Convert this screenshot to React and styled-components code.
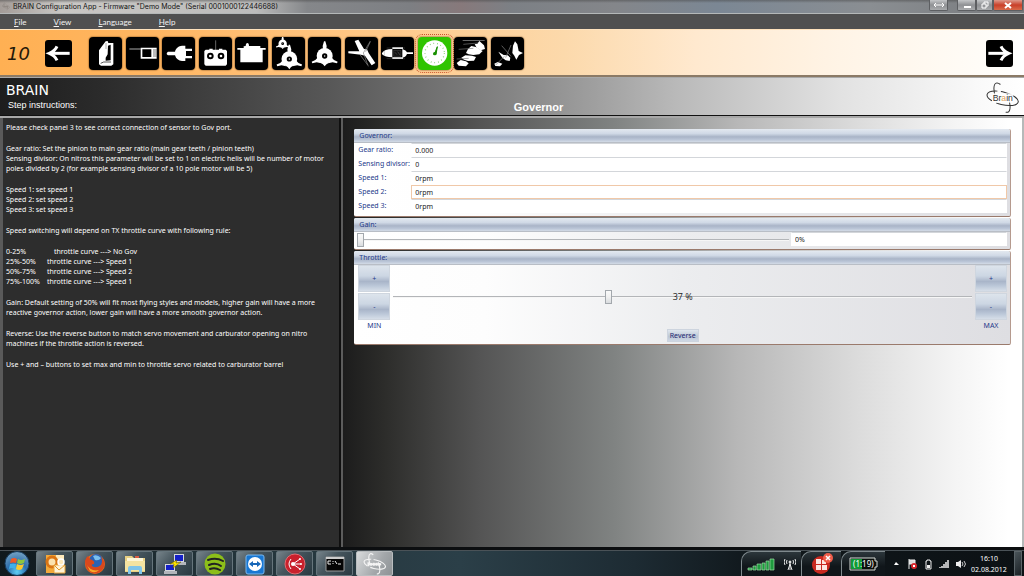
import React, { useState } from 'react';
import styled, { createGlobalStyle, css } from 'styled-components';

const GlobalStyle = createGlobalStyle`
  *, *::before, *::after { box-sizing: border-box; }
  html, body { margin: 0; padding: 0; }
  body { font-family: Lato, "Open Sans", "Noto Sans", sans-serif; font-size: 8px; }
  button, input { font: inherit; margin: 0; padding: 0; border: 0; }
  button { cursor: pointer; }
`;

const Screen = styled.div`
  min-height: 100vh;
  display: flex;
  flex-direction: column;
  background: #1c1f22;
`;

/* ---------- window frame ---------- */

const TitleBar = styled.header`
  display: flex;
  align-items: center;
  height: 14px;
  padding: 0 1px 0 2px;
  gap: 3px;
  border-bottom: 1px solid #b4b8b8;
  background:
    linear-gradient(180deg, rgba(70, 70, 70, 0.5) 0, transparent 3px),
    linear-gradient(90deg, #a39c98 0, #c9c7c4 6%, #bcbcbb 25%, #85878a 30%, #7d7f83 40%,
      #87797b 45%, #7c8085 50%, #84868a 60%, #7b8794 70%, #8a8e92 85%, #77797c 100%);
  svg { width: 8px; height: 9px; }
`;

const Title = styled.h1`
  flex: 1;
  margin: 0;
  font: 400 7px/14px Inter, sans-serif;
  color: #111;
  white-space: nowrap;
`;

const WindowButtons = styled.div`
  display: flex;
  align-self: flex-start;
  height: 11px;
`;

const WindowButton = styled.button`
  display: grid;
  place-items: center;
  width: ${p => p.$w}px;
  height: 11px;
  margin-right: ${p => (p.$apart ? 9 : 0)}px;
  border: 1px solid #5d5f62;
  border-top: 0;
  border-radius: 0 0 2px 2px;
  background: ${p => (p.$close
    ? 'linear-gradient(180deg, #dd9a8c 0, #c9402a 50%, #d96a4a 100%)'
    : 'linear-gradient(180deg, #c4c6c8 0, #8f9194 50%, #a9abad 100%)')};
  svg { width: 12px; height: 8px; }
`;

const MenuBar = styled.nav`
  display: flex;
  height: 15px;
  padding: 1px 0 0 14px;
  gap: 27px;
  background: #505050;
  button {
    background: none;
    color: #f2f2f2;
    font-size: 8px;
    line-height: 14px;
  }
  button::first-letter { text-decoration: underline; }
`;

const ToolBar = styled.nav`
  display: flex;
  align-items: center;
  height: 48px;
  padding: 2px 11px 0 7px;
  border-top: 1px solid #ffe3bd;
  border-bottom: 2px solid #8b7a66;
  background: linear-gradient(90deg, #ffb053 0, #ffb662 15%, #ffc887 36%, #fcd9ab 55%, #ffe9cf 68%, #fff4e6 82%, #fffdf9 97%, #fff 100%);
`;

const StepNumber = styled.output`
  width: 38px;
  font: italic 400 18px/24px "DejaVu Sans", sans-serif;
  color: #241808;
`;

const ArrowButton = styled.button`
  width: 27px;
  height: 27px;
  border-radius: 3px;
  background: #000;
  svg { display: block; width: 27px; height: 27px; }
`;

const StepList = styled.div`
  display: flex;
  justify-content: space-between;
  width: 435px;
  margin: 0 auto 0 17px;
`;

const StepButton = styled.button`
  width: 33px;
  height: 33px;
  border-radius: 4px;
  background: ${p => (p.$active ? '#2fc400' : '#000')};
  box-shadow: 0 0 1px 1px rgba(90, 50, 10, 0.3);
  ${p => p.$active && css`
    outline: 1px dotted #c8542c;
    outline-offset: 2px;
  `}
  svg { display: block; width: 33px; height: 33px; }
`;

const StepHeader = styled.section`
  display: grid;
  grid-template-columns: auto 1fr auto;
  height: 39px;
  padding: 4px 4px 0 6px;
  border-top: 1px solid #a9a9a9;
  border-bottom: 1px solid #111;
  color: #fff;
  background: linear-gradient(90deg, #1d1d1d 0, #2b2b2b 10%, #575757 32%, #858585 50%, #b9b9b9 66%, #e2e2e2 82%, #fafafa 96%, #fff 100%);
`;

const Product = styled.div`
  padding-right: 14px;
  font: 400 14px/16px "DejaVu Sans", sans-serif;
  small {
    display: block;
    padding-left: 2px;
    font: 400 9px/14px "Liberation Sans", sans-serif;
  }
`;

const StepTitle = styled.h2`
  align-self: end;
  margin: 0 0 1px;
  text-align: center;
  font: 700 11px/14px "Liberation Sans", sans-serif;
`;

const Brand = styled.div`
  svg { display: block; width: 34px; height: 32px; }
`;

/* ---------- main panels ---------- */

const Panels = styled.main`
  flex: 1;
  display: grid;
  grid-template-columns: 1fr 2fr;
  border-top: 2px solid #a8a8a8;
  border-bottom: 3px solid #0c0e10;
`;

const Instructions = styled.section`
  padding: 5px 2px 8px 3px;
  border-left: 3px solid #5a5a5a;
  border-right: 2px solid #0f0f0f;
  background: #2d2d2d;
  color: #fff;
  font: 400 7px/10px "Noto Sans", sans-serif;
  p { margin: 0 0 11px; }
  table { border-collapse: collapse; margin: 0 0 11px; }
  td { padding: 0; height: 10px; }
  td:first-child { width: 41px; }
  tr:first-child td:last-child { padding-left: 7px; }
`;

const Settings = styled.section`
  display: flex;
  flex-direction: column;
  gap: 1px;
  padding: 11px 11px 12px 11px;
  border-left: 2px solid #5c5c5c;
  border-right: 2px solid #b5b9b9;
  background: linear-gradient(90deg, #1c1c1c 0, #2c2c2a 6%, #545454 20%, #808382 40%, #b7b7b7 58%, #dcdcdc 76%, #f4f4f4 90%, #fff 98%);
`;

const Group = styled.fieldset`
  min-width: 0;
  margin: 0;
  padding: 0 0 ${p => p.$foot}px;
  border: 0;
  border-right: 1px solid #b59a8e;
  border-bottom: 1px solid #9a7a6c;
  border-radius: 2px;
  background: linear-gradient(90deg, #fff 0, #fdfdfd 20%, #ecedef 50%, #dedee2 100%);
  color: #24398a;
`;

const GroupTitle = styled.legend`
  float: left;
  width: 100%;
  height: 14px;
  padding: 0 5px;
  border-bottom: 1px solid #b9bec6;
  border-radius: 2px 2px 0 0;
  background: linear-gradient(180deg, #e3e9f0 0, #d0d9e6 35%, #a9b4c7 60%, #b9c4d6 80%, #d3dbe6 100%);
  font: 400 7px/14px "Noto Sans", sans-serif;
  color: #24398a;
`;

const Field = styled.div`
  clear: both;
  display: grid;
  grid-template-columns: 53px 1fr;
  height: 14px;
  padding: 0 3px 0 4px;
  label { font: 400 7px/14px "Noto Sans", sans-serif; white-space: nowrap; }
`;

const TextBox = styled.input`
  width: 100%;
  height: 14px;
  padding: 0 3px;
  border: 1px solid ${p => (p.$hot ? '#f0c8a8' : 'transparent')};
  border-top-color: ${p => (p.$hot ? '#f0c8a8' : '#d3d6da')};
  background: #fff;
  color: #222;
  font: 400 7px/12px "Noto Sans", sans-serif;
  outline: none;
`;

const GainRow = styled.div`
  clear: both;
  display: grid;
  grid-template-columns: 2fr 1fr;
  gap: 2px;
  height: 15px;
  padding: 0 3px 0 3px;
`;

const Slider = styled.input`
  appearance: none;
  width: 100%;
  height: 15px;
  background: transparent;
  &::-webkit-slider-runnable-track {
    height: 2px;
    border-top: 1px solid #b3b5b8;
    background: #f6f6f6;
  }
  &::-webkit-slider-thumb {
    appearance: none;
    width: 7px;
    height: 14px;
    margin-top: -7px;
    border: 1px solid #a3a8ad;
    background: linear-gradient(180deg, #fafafa 0, #f0f0f0 50%, #d9dcdf 100%);
  }
`;

const ThrottleRow = styled.div`
  clear: both;
  display: grid;
  grid-template-columns: 32px 1fr 32px;
  column-gap: 3px;
  padding: 0 3px 0 4px;
`;

const TrimStack = styled.div`
  display: flex;
  flex-direction: column;
  gap: 1px;
  text-align: center;
  font: 400 7px/10px "Noto Sans", sans-serif;
`;

const TrimButton = styled.button`
  height: 27px;
  border: 1px solid #cfd6df;
  background: linear-gradient(180deg, #dde4ec 0, #ccd6e3 40%, #a9b5c9 62%, #bcc8d9 80%, #d6dee8 100%);
  color: #24398a;
  line-height: 24px;
`;

const Travel = styled.div`
  display: grid;
  grid-template-rows: 64px 14px;
  justify-items: center;
  > * { grid-column: 1; }
  ${Slider} { grid-row: 1; align-self: center; }
`;

const Percent = styled.output`
  grid-row: 1;
  align-self: center;
  font: 400 9px/12px "Open Sans", sans-serif;
  color: #222;
  pointer-events: none;
`;

const ReverseButton = styled.button`
  grid-row: 2;
  width: 32px;
  height: 13px;
  border: 1px solid #cdd4de;
  background: linear-gradient(180deg, #dfe6ee 0, #bcc6d6 60%, #cfd8e4 100%);
  color: #1d2770;
  font: 400 7px/11px "Noto Sans", sans-serif;
`;

/* ---------- taskbar ---------- */

const TaskBar = styled.footer`
  display: flex;
  height: 26px;
  padding-right: 2px;
  border-top: 1px solid #4a5257;
  background: linear-gradient(90deg, #10191d 0, #223238 20%, #2b3f48 45%, #1d2b33 62%, #10171b 74%, #0c1114 100%);
`;

const StartButton = styled.button`
  width: 34px;
  background: none;
  svg { display: block; width: 26px; height: 25px; margin-left: 4px; }
`;

const TaskButtons = styled.div`
  display: flex;
  flex: 1;
  gap: 3px;
  padding-left: 2px;
`;

const TaskButton = styled.button`
  display: grid;
  place-items: center;
  width: 37px;
  height: 25px;
  border: 1px solid ${p => (p.$active ? '#b9bdbf' : '#66757c')};
  border-radius: 2px;
  background: ${p => (p.$active
    ? 'linear-gradient(120deg, #d9dbdc 0, #a3a7aa 60%, #8d9295 100%)'
    : 'linear-gradient(130deg, #76838a 0, #47565e 40%, #2a3941 100%)')};
  svg { width: 24px; height: 22px; }
`;

const TrayTab = styled.div`
  display: flex;
  align-items: center;
  justify-content: center;
  gap: 9px;
  width: ${p => p.$w}px;
  border-left: 1px solid #7f898d;
  border-top: 1px solid #7f898d;
  border-top-left-radius: 10px;
  background: linear-gradient(180deg, #2c363b 0, #10161a 60%);
  svg { height: 22px; width: ${p => p.$icon}px; }
  svg + svg { width: 12px; }
`;

const TrayIcons = styled.div`
  display: flex;
  align-items: center;
  gap: 5px;
  padding-left: 6px;
  svg { width: 11px; height: 12px; }
`;

const Clock = styled.time`
  width: 46px;
  margin: 0 2px 0 0;
  padding-top: 2px;
  text-align: center;
  font: 400 7px/11px "Noto Sans", sans-serif;
  color: #fff;
  span { display: block; }
`;

const ShowDesktop = styled.button`
  width: 8px;
  border: 1px solid #5b6468;
  background: linear-gradient(135deg, #4a5459, #1a2024);
`;

/* ---------- drawings ---------- */

const W = '#fff';

const Book = () => (
  <svg viewBox="0 0 99 99" fill={W}>
    <path d="M50 13 L56 12 L58 18 H73 V82 L67 86 H36 L30 82 V40 Z" />
    <path d="M57 26 L65 23 V70 L50 71 V62 L56 52 Z" fill="#000" />
    <path d="M35 79 L44 75 H66" stroke="#000" strokeWidth="2" fill="none" />
    <path d="M51 18 V36" stroke="#888" strokeWidth="2" />
  </svg>
);

const Receiver = () => (
  <svg viewBox="0 0 99 99" fill={W}>
    <path d="M10 36 H44" stroke="#aaa" strokeWidth="3" fill="none" />
    <path d="M44 32 H92 V65 H44 Z M49 37 V60 H76 V37 Z" fillRule="evenodd" />
    <path d="M81 39 H92 M81 45 H92 M81 51 H92 M81 57 H92" stroke="#333" strokeWidth="2" />
  </svg>
);

const Plug = () => (
  <svg viewBox="0 0 99 99" fill={W}>
    <path d="M18 44 H39 C42 32 50 27 60 26 H70 V35 H90 V42 H72 V57 H90 V64 H70 V72 H60 C50 71 42 66 39 55 H18 Q10 50 18 44 Z" />
  </svg>
);

const Radio = () => (
  <svg viewBox="0 0 99 99" fill={W}>
    <path d="M50 10 V40" stroke="#999" strokeWidth="2" />
    <path d="M31 35 H41 V38 H60 V35 H70 V38 H80 L84 42 V82 L80 86 H20 L16 82 V42 L20 38 H31 Z" />
    <circle cx="34" cy="57" r="10" fill="#000" /><circle cx="66" cy="57" r="10" fill="#000" />
    <circle cx="34" cy="57" r="4" /><circle cx="66" cy="57" r="4" />
  </svg>
);

const Servo = () => (
  <svg viewBox="0 0 99 99" fill={W}>
    <path d="M32 26 Q32 18 37 18 Q42 18 42 27 H76 V33 H92 V38 H83 V76 H16 V38 H7 V33 H26 V28 L32 27 Z" />
  </svg>
);

const Swash = ({ x = 50, y = 57, s = 1 }) => (
  <g transform={`translate(${x} ${y}) scale(${s})`}>
    <path d="M-2 -44 H2 L6 -30 L5 -20 H-5 L-6 -30 Z M-20 4 L-28 12 L-39 17 L-37 22 L-24 19 L-10 22 Z M20 4 L28 12 L39 17 L37 22 L24 19 L10 22 Z M-10 20 L-4 26 L0 31 L4 26 L10 20 Z" />
    <circle r="24" />
    <circle r="8" fill="#000" />
    <circle r="2" />
  </g>
);

const SwashOne = () => <svg viewBox="0 0 99 99" fill={W}><Swash /></svg>;
const SwashTwo = () => (
  <svg viewBox="0 0 99 99" fill={W}><Swash x={52} y={66} s={0.98} /><Swash x={32} y={20} s={0.52} /></svg>
);

const RotorHead = () => (
  <svg viewBox="0 0 99 99" fill={W}>
    <path d="M29 12 L40 8 L57 36 L66 37 L71 48 L91 78 L80 85 L60 56 L48 53 L10 49 V43 L43 43 Z" />
    <path d="M76 12 L55 48 L70 88 M76 14 L62 44 M45 53 L68 84" stroke="#888" strokeWidth="2" fill="none" />
  </svg>
);

const TailRotor = () => (
  <svg viewBox="0 0 99 99" fill={W}>
    <path d="M3 48 Q10 36 34 36 V61 Q12 61 3 52 Z M34 31 H66 V36 H34 Z M34 61 H66 V66 H34 Z M64 36 Q76 40 78 46 H96 V51 H78 Q75 60 64 62 Z" />
    <path d="M38 40 H60 V58 H38 Z" fill="#111" stroke="#777" strokeWidth="1" />
    <path d="M42 46 L48 53 M50 44 L57 54" stroke="#999" />
    <path d="M10 42 V56 M17 33 H72 M17 65 H72" stroke="#777" strokeWidth="1" />
  </svg>
);

const Gauge = () => (
  <svg viewBox="0 0 99 99">
    <circle cx="50" cy="48" r="38" fill={W} />
    <circle cx="50" cy="48" r="29" fill="none" stroke="#6bc552" strokeWidth="4" strokeDasharray="2 9" />
    <path d="M49 52 L58 29 L54 53 Z" fill="#199000" stroke="#199000" strokeWidth="3" />
    <circle cx="50" cy="50" r="5" fill="#199000" />
  </svg>
);

const HeliFleet = () => (
  <svg viewBox="0 0 99 99" fill={W}>
    <path d="M26 9 H92 V11 H26 Z" opacity=".6" />
    <path d="M62 22 L70 20 L76 12 L90 25 L93 36 L80 40 L68 32 Z" />
    <path d="M36 48 L42 36 L52 27 L66 30 L86 42 L76 52 L58 54 L44 52 Z" />
    <path d="M22 62 L34 55 L54 56 L66 60 L60 71 L42 72 L30 68 Z" />
    <path d="M8 78 L20 69 L36 73 L44 79 L36 88 L14 86 Z" />
    <path d="M14 37 L58 34 M8 66 L44 64 M28 22 L72 18" stroke="#777" strokeWidth="2" />
  </svg>
);

const HeliTurn = () => (
  <svg viewBox="0 0 99 99" fill={W}>
    <path d="M72 13 L79 22 L83 42 L96 48 L84 54 L76 68 L70 56 L64 48 L66 26 Z" />
    <path d="M22 44 L38 54 L50 55 L58 62 L56 72 L44 70 L34 62 Z" />
    <path d="M10 80 L20 75 L34 80 L27 88 L13 87 Z" />
    <path d="M32 26 L60 58 M14 84 L40 58 M60 24 L44 62" stroke="#888" strokeWidth="2" />
  </svg>
);

const Arrow = ({ flip }) => (
  <svg viewBox="0 0 81 81" fill="none" stroke={W} strokeWidth="9">
    <g transform={flip ? 'translate(81 0) scale(-1 1)' : undefined}>
      <path d="M14 40 H74" /><path d="M36 19 Q30 33 13 40 Q30 47 36 61" />
    </g>
  </svg>
);

const OrbitLogo = ({ light }) => (
  <svg viewBox="0 0 102 96" fill="none" stroke={light || '#333'} strokeWidth={light ? 5 : 3}>
    <ellipse cx="50" cy="49" rx="48" ry="19" transform="rotate(14 50 49)" strokeDasharray="70 14 60 10" />
    <ellipse cx="48" cy="47" rx="18" ry="47" transform="rotate(-22 48 47)" strokeDasharray="60 50 64 40" />
    {light && <path d="M22 40 V58 M34 44 V56 M46 42 V56 M58 42 V56 M70 44 V58 M22 49 H78" strokeWidth="8" />}
    {!light && (
      <>
        <path d="M20 34 H82 V62 H20 Z" fill="#fff" stroke="none" opacity=".9" />
        <text x="20" y="58" fill="#333" stroke="none" fontFamily="Liberation Sans, sans-serif" fontSize="26">
          Br<tspan fill="#e3a55b">a</tspan>in
        </text>
      </>
    )}
  </svg>
);

const WinOrb = () => (
  <svg viewBox="0 0 26 25">
    <defs>
      <radialGradient id="orb" cx=".5" cy=".85" r=".8">
        <stop offset="0" stopColor="#5fd0f5" /><stop offset=".5" stopColor="#2d6fae" /><stop offset="1" stopColor="#6f9dc0" />
      </radialGradient>
    </defs>
    <circle cx="13" cy="12.500" r="12" fill="url(#orb)" stroke="#163a5c" />
    <path d="M7 8 Q10 6 13 8 L12 12 Q9 11 6 12 Z" fill="#ee5a27" />
    <path d="M14 8 Q17 10 21 8 L20 12 Q16 14 13 12 Z" fill="#8dc63f" />
    <path d="M6 13 Q9 12 12 13 L11 18 Q8 16 5 18 Z" fill="#3fb0ea" />
    <path d="M13 13 Q16 15 20 13 L18 18 Q15 20 12 18 Z" fill="#fdc92c" />
  </svg>
);

const Outlook = () => (
  <svg viewBox="0 0 24 22">
    <path d="M3 2 H21 V20 H3 Z" fill="#f3a93a" /><path d="M13 2 H21 V12 H13 Z" fill="#fde9bb" />
    <circle cx="9" cy="9" r="5" fill="#fbe2ae" stroke="#d97413" strokeWidth="3" />
    <path d="M11 12 H22 V20 H11 Z" fill="#fff3d6" stroke="#e9a53a" /><path d="M11 12 L16 17 L22 12" fill="none" stroke="#e29a2a" />
    <circle cx="18" cy="9" r="3" fill="none" stroke="#fff" strokeWidth="1.500" />
  </svg>
);

const Firefox = () => (
  <svg viewBox="0 0 24 22">
    <circle cx="12" cy="11" r="10" fill="#e66a1b" /><circle cx="13" cy="8" r="7" fill="#2b63b5" />
    <path d="M10 3 Q14 1 18 5 Q16 8 12 7 Z" fill="#7cc0ee" />
    <path d="M2 8 Q3 4 5 3 Q6 6 9 7 Q12 8 11 11 Q8 11 9 13 Q13 16 18 12 Q20 8 18 4 Q23 8 21 14 Q17 22 9 20 Q2 17 2 8 Z" fill="#d9481c" />
    <path d="M4 12 Q8 19 16 17 Q12 21 7 18 Z" fill="#f7a928" />
  </svg>
);

const Explorer = () => (
  <svg viewBox="0 0 24 22">
    <path d="M2 3 H9 L11 5 H22 V19 H2 Z" fill="#e8d083" /><path d="M4 5 H20 V9 H4 Z" fill="#fdf6d8" />
    <path d="M2 8 H22 V18 H2 Z" fill="#f4e3a1" /><path d="M12 3 H16 V5 H12 Z" fill="#da5b43" />
    <path d="M5 21 V15 Q5 13 7 13 H17 Q19 13 19 15 V21 H16 V17 H8 V21 Z" fill="#7fc4ea" />
  </svg>
);

const Putty = () => (
  <svg viewBox="0 0 24 22">
    <path d="M11 1 H21 V9 H11 Z M2 11 H12 V18 H2 Z" fill="#d5d7dc" /><path d="M12 2 H20 V8 H12 Z M3 12 H11 V17 H3 Z" fill="#1420c8" />
    <path d="M10 9 H23 V12 H12 Z M1 18 H14 V21 H1 Z" fill="#b2b5bb" />
    <path d="M7 11 L14 7 L13 10 L18 9 L10 15 L11 11 Z" fill="#ffe600" stroke="#554400" strokeWidth=".5" />
  </svg>
);

const Spotify = () => (
  <svg viewBox="0 0 24 22">
    <circle cx="12" cy="11" r="10.500" fill="#8cbe19" />
    <path d="M5 7 Q13 4 20 8 M6 12 Q13 9 18 13 M7 16 Q12 14 17 17" fill="none" stroke="#222" strokeWidth="2" strokeLinecap="round" />
  </svg>
);

const TeamViewer = () => (
  <svg viewBox="0 0 24 22">
    <rect x="3" y="2" width="18" height="19" rx="2" fill="#1877d2" stroke="#7ab8ee" /><circle cx="12" cy="11" r="7" fill="#fff" />
    <path d="M6 11 L10 8 V10 H14 V8 L18 11 L14 14 V12 H10 V14 Z" fill="#1766b8" />
  </svg>
);

const Share = () => (
  <svg viewBox="0 0 24 22">
    <circle cx="12" cy="11" r="10" fill="#c9202c" stroke="#e46a70" />
    <path d="M10 11 L17 6 M10 11 H18 M10 11 L17 16 M8 6 Q4 11 8 16" stroke="#fff" fill="none" />
    <circle cx="10" cy="11" r="2" fill="#fff" /><circle cx="17" cy="6" r="1" fill="#fff" />
    <circle cx="18" cy="11" r="1" fill="#fff" /><circle cx="17" cy="16" r="1" fill="#fff" />
  </svg>
);

const Console = () => (
  <svg viewBox="0 0 24 22">
    <path d="M3 4 H21 V18 H3 Z" fill="#050505" stroke="#9a9a9a" /><path d="M3 4 H21 V6 H3 Z" fill="#ccc" />
    <path d="M8 8 H5 V11 H8 M10 8 V9 M10 10 V11 M12 8 L14 11 M15 11 H18" stroke="#eee" fill="none" />
  </svg>
);

const Signal = () => (
  <svg viewBox="0 0 28 22">
    <path d="M1 15 H5 V17 H1 Z M6 13 H9 V17 H6 Z M10 11 H14 V17 H10 Z M15 10 H18 V17 H15 Z M19 8 H22 V17 H19 Z M23 6 H27 V17 H23 Z" fill="#1f9a3e" stroke="#9fdca8" strokeWidth=".7" />
  </svg>
);

const Antenna = () => (
  <svg viewBox="0 0 12 22" fill="none" stroke="#e8e8e8">
    <path d="M6 10 V17 M4 17 L6 11 L8 17 M3 7 Q2 9 3 11 M1 6 Q-1 9 1 12 M9 7 Q10 9 9 11 M11 6 Q13 9 11 12" /><circle cx="6" cy="9" r="1" fill="#fff" />
  </svg>
);

const Modules = () => (
  <svg viewBox="0 0 22 22">
    <circle cx="10" cy="12" r="9" fill="#c92920" />
    <path d="M5 6 H10 V11 H5 Z M11 7 H15 V11 H11 Z M5 12 H10 V17 H5 Z M11 12 H16 V17 H11 Z" fill="#fde6e2" />
    <circle cx="17" cy="5" r="5" fill="#ef5d4a" /><path d="M15 3 L19 7 M19 3 L15 7" stroke="#fff" strokeWidth="1.500" />
  </svg>
);

const Battery = () => (
  <svg viewBox="0 0 30 22">
    <path d="M1 5 H26 V8 H28 V14 H26 V17 H1 Z" fill="#0a0f0c" stroke="#d6dad6" /><path d="M2 6 H13 V16 H2 Z" fill="#109a35" />
    <text x="4" y="14" fill="#fff" fontFamily="Noto Sans, sans-serif" fontSize="8">(1:19)</text>
  </svg>
);

const steps = [
  ['Manual', Book], ['Receiver', Receiver], ['Connection', Plug], ['Radio', Radio], ['Servo', Servo],
  ['Swash type', SwashTwo], ['Swash setup', SwashOne], ['Rotor head', RotorHead], ['Tail', TailRotor],
  ['Governor', Gauge], ['Flight style', HeliFleet], ['Stabilisation', HeliTurn],
];

const tasks = [
  ['Outlook', Outlook], ['Firefox', Firefox], ['Explorer', Explorer], ['PuTTY', Putty], ['Spotify', Spotify],
  ['TeamViewer', TeamViewer], ['Share', Share], ['Console', Console],
];

const fields = [
  ['ratio', 'Gear ratio:', '0.000'],
  ['divisor', 'Sensing divisor:', '0'],
  ['speed1', 'Speed 1:', '0rpm'],
  ['speed2', 'Speed 2:', '0rpm', true],
  ['speed3', 'Speed 3:', '0rpm'],
];

const curve = [
  ['0-25%', 'No Gov'], ['25%-50%', 'Speed 1'], ['50%-75%', 'Speed 2'], ['75%-100%', 'Speed 1'],
];

function Trim({ label }) {
  return (
    <TrimStack>
      <TrimButton aria-label={`${label} up`}>+</TrimButton>
      <TrimButton aria-label={`${label} down`}>-</TrimButton>
      {label}
    </TrimStack>
  );
}

export default function App() {
  const [gain, setGain] = useState(0);
  const [throttle, setThrottle] = useState(37);

  return (
    <Screen>
      <GlobalStyle />
      <TitleBar>
        <OrbitLogo light="#8b8580" />
        <Title>BRAIN Configuration App - Firmware "Demo Mode" (Serial 0001000122446688)</Title>
        <WindowButtons>
          <WindowButton $w={19} $apart aria-label="Resize">
            <svg viewBox="0 0 12 8"><path d="M1 4 H11 M3 2 L1 4 L3 6 M9 2 L11 4 L9 6" stroke="#fff" fill="none" /></svg>
          </WindowButton>
          <WindowButton $w={19} aria-label="Minimize">
            <svg viewBox="0 0 12 8"><path d="M3 6 H10" stroke="#fff" strokeWidth="2" /></svg>
          </WindowButton>
          <WindowButton $w={17} aria-label="Restore">
            <svg viewBox="0 0 12 8"><path d="M3 3 H7 V7 H3 Z M5 3 V1 H9 V5 H7" stroke="#fff" fill="none" /></svg>
          </WindowButton>
          <WindowButton $w={30} $close aria-label="Close">
            <svg viewBox="0 0 12 8"><path d="M3 2 L9 7 M9 2 L3 7" stroke="#fff" strokeWidth="2" /></svg>
          </WindowButton>
        </WindowButtons>
      </TitleBar>

      <MenuBar>
        <button>File</button><button>View</button><button>Language</button><button>Help</button>
      </MenuBar>

      <ToolBar>
        <StepNumber>10</StepNumber>
        <ArrowButton aria-label="Previous step"><Arrow /></ArrowButton>
        <StepList>
          {steps.map(([name, Icon]) => (
            <StepButton key={name} aria-label={name} $active={name === 'Governor'}><Icon /></StepButton>
          ))}
        </StepList>
        <ArrowButton aria-label="Next step"><Arrow flip /></ArrowButton>
      </ToolBar>

      <StepHeader>
        <Product>BRAIN<small>Step instructions:</small></Product>
        <StepTitle>Governor</StepTitle>
        <Brand><OrbitLogo /></Brand>
      </StepHeader>

      <Panels>
        <Instructions>
          <p>Please check panel 3 to see correct connection of sensor to Gov port.</p>
          <p>
            Gear ratio: Set the pinion to main gear ratio (main gear teeth / pinion teeth)<br />
            Sensing divisor: On nitros this parameter will be set to 1 on electric helis will be number of motor poles divided by 2 (for example sensing divisor of a 10 pole motor will be 5)
          </p>
          <p>Speed 1: set speed 1<br />Speed 2: set speed 2<br />Speed 3: set speed 3</p>
          <p>Speed switching will depend on TX throttle curve with following rule:</p>
          <table>
            <tbody>
              {curve.map(([range, result]) => (
                <tr key={range}><td>{range}</td><td>throttle curve ---&gt; {result}</td></tr>
              ))}
            </tbody>
          </table>
          <p>Gain: Default setting of 50% will fit most flying styles and models, higher gain will have a more reactive governor action, lower gain will have a more smooth governor action.</p>
          <p>Reverse: Use the reverse button to match servo movement and carburator opening on nitro machines if the throttle action is reversed.</p>
          <p>Use + and – buttons to set max and min to throttle servo related to carburator barrel</p>
        </Instructions>

        <Settings>
          <Group $foot={3}>
            <GroupTitle>Governor:</GroupTitle>
            {fields.map(([id, label, value, hot]) => (
              <Field key={id}>
                <label htmlFor={id}>{label}</label>
                <TextBox id={id} defaultValue={value} $hot={hot} />
              </Field>
            ))}
          </Group>
          <Group $foot={2}>
            <GroupTitle>Gain:</GroupTitle>
            <GainRow>
              <Slider type="range" aria-label="Gain" value={gain} onChange={e => setGain(e.target.value)} />
              <TextBox aria-label="Gain value" readOnly value={`${gain}%`} />
            </GainRow>
          </Group>
          <Group $foot={1}>
            <GroupTitle>Throttle:</GroupTitle>
            <ThrottleRow>
              <Trim label="MIN" />
              <Travel>
                <Slider type="range" aria-label="Throttle" value={throttle} onChange={e => setThrottle(e.target.value)} />
                <Percent>{throttle} %</Percent>
                <ReverseButton>Reverse</ReverseButton>
              </Travel>
              <Trim label="MAX" />
            </ThrottleRow>
          </Group>
        </Settings>
      </Panels>

      <TaskBar>
        <StartButton aria-label="Start"><WinOrb /></StartButton>
        <TaskButtons>
          {tasks.map(([name, Icon]) => <TaskButton key={name} aria-label={name}><Icon /></TaskButton>)}
          <TaskButton $active aria-label="BRAIN"><OrbitLogo light="#f4f4f4" /></TaskButton>
        </TaskButtons>
        <TrayTab $w={60} $icon={28}><Signal /><Antenna /></TrayTab>
        <TrayTab $w={40} $icon={22}><Modules /></TrayTab>
        <TrayTab $w={44} $icon={30}><Battery /></TrayTab>
        <TrayIcons>
          <svg viewBox="0 0 11 12"><path d="M3 7 L5 4 L8 7 Z" fill="#fff" /></svg>
          <svg viewBox="0 0 11 12"><path d="M2 1 V11 M2 2 H8 V6 H2" stroke="#eee" fill="#ddd" /><circle cx="7" cy="8" r="3" fill="#d8262c" /><path d="M6 7 L8 9 M8 7 L6 9" stroke="#fff" /></svg>
          <svg viewBox="0 0 11 12"><path d="M4 2 H7 V3 H8 V11 H3 V3 H4 Z" fill="none" stroke="#eee" /><path d="M4 7 H7 V10 H4 Z" fill="#eee" /></svg>
          <svg viewBox="0 0 11 12"><path d="M1 10 V9 M3 10 V8 M5 10 V6 M7 10 V4 M9 10 V2" stroke="#eee" strokeWidth="1.500" /></svg>
          <svg viewBox="0 0 11 12"><path d="M1 4 H3 L6 2 V10 L3 8 H1 Z" fill="#eee" /><path d="M7 4 Q9 6 7 8 M9 3 Q12 6 9 9" stroke="#ccc" fill="none" /></svg>
        </TrayIcons>
        <Clock><span>16:10</span><span>02.08.2012</span></Clock>
        <ShowDesktop aria-label="Show desktop" />
      </TaskBar>
    </Screen>
  );
}
